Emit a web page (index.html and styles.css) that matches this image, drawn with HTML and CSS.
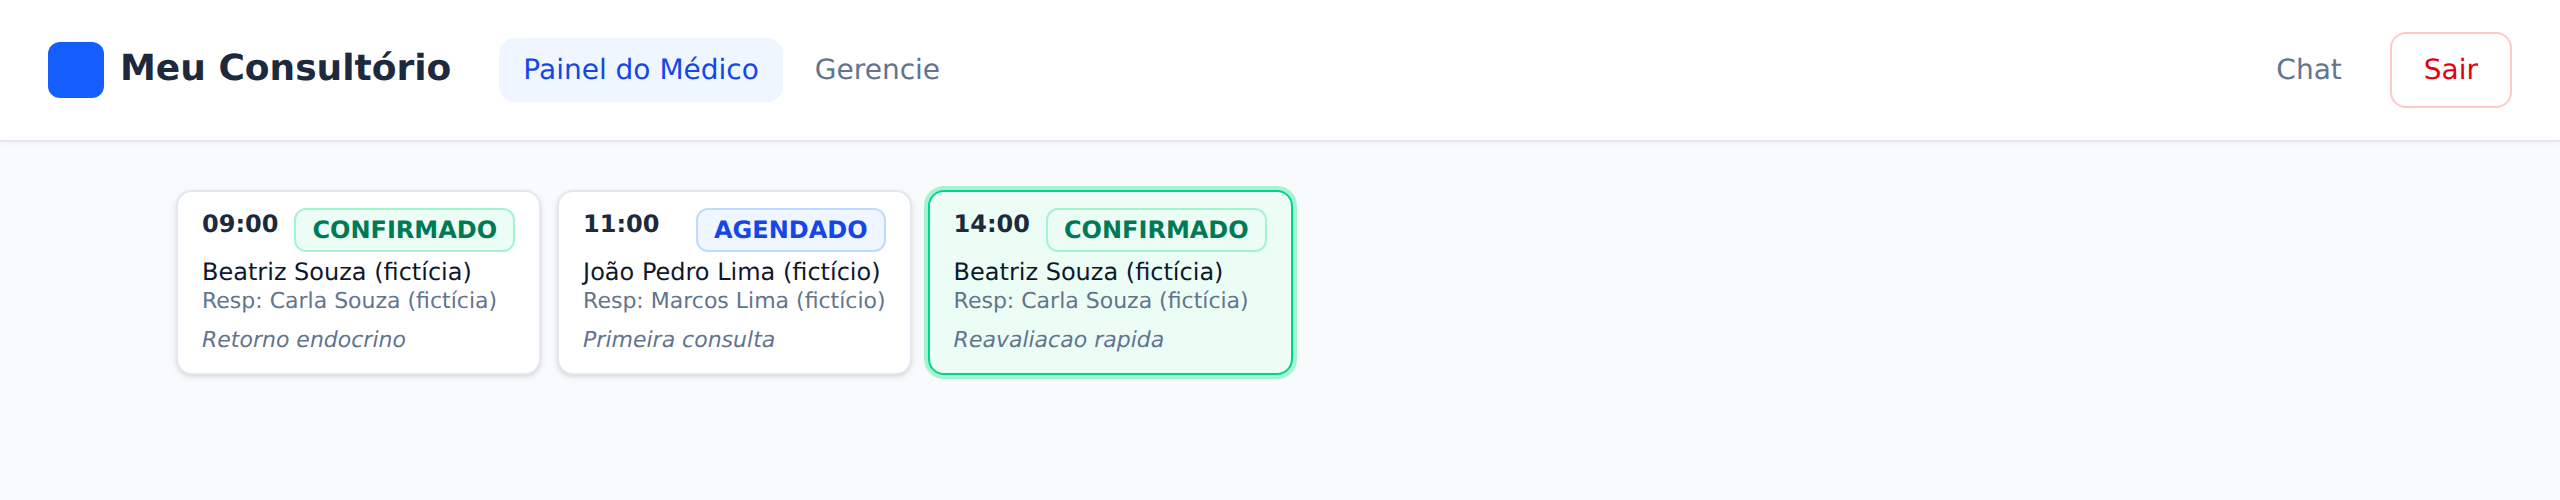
FILE: index.html
```html
<!DOCTYPE html>
<html lang="pt-BR">
<head>
<meta charset="utf-8">
<title>Meu Consultório</title>
<link rel="stylesheet" href="styles.css">
</head>
<body>
<header class="topbar">
  <div class="left">
    <div class="brand"><span class="logo"></span><span class="brand-name">Meu Consultório</span></div>
    <nav class="nav">
      <a class="nav-link active">Painel do Médico</a>
      <a class="nav-link">Gerencie</a>
    </nav>
  </div>
  <div class="right">
    <a class="nav-link">Chat</a>
    <a class="logout">Sair</a>
  </div>
</header>
<main class="content">
  <article class="card">
    <div class="card-head"><span class="time">09:00</span><span class="badge green">CONFIRMADO</span></div>
    <div class="patient">Beatriz Souza (fictícia)</div>
    <div class="resp">Resp: Carla Souza (fictícia)</div>
    <div class="note">Retorno endocrino</div>
  </article>
  <article class="card">
    <div class="card-head"><span class="time">11:00</span><span class="badge blue">AGENDADO</span></div>
    <div class="patient">João Pedro Lima (fictício)</div>
    <div class="resp">Resp: Marcos Lima (fictício)</div>
    <div class="note">Primeira consulta</div>
  </article>
  <article class="card selected">
    <div class="card-head"><span class="time">14:00</span><span class="badge green">CONFIRMADO</span></div>
    <div class="patient">Beatriz Souza (fictícia)</div>
    <div class="resp">Resp: Carla Souza (fictícia)</div>
    <div class="note">Reavaliacao rapida</div>
  </article>
</main>
</body>
</html>
```
FILE: styles.css
```css
* { box-sizing: border-box; }
html, body { margin: 0; height: 100%; }
body { background: #f8fafc; font-family: "DejaVu Sans", sans-serif; color: #0f172b; text-rendering: geometricPrecision; }
.topbar { height: 142px; background: #fff; border-bottom: 2px solid #e2e8f0; box-shadow: 0 2px 6px rgba(0,0,0,.03); display: flex; align-items: center; justify-content: space-between; padding: 0 48px; }
.left, .right, .brand, .nav { display: flex; align-items: center; }
.brand { gap: 16px; }
.logo { width: 56px; height: 56px; border-radius: 12px; background: #155dfc; }
.brand-name { font-size: 36px; font-weight: 700; color: #1d293d; line-height: 40px; margin-top: -2px; }
.nav { margin-left: 48px; gap: 8px; }
.nav-link { display: block; padding: 0 24px; height: 64px; line-height: 64px; font-size: 28px; color: #62748e; border-radius: 16px; }
.nav-link.active { background: #eff6ff; color: #1447e6; }
.right { gap: 24px; }
.logout { display: block; height: 76px; line-height: 72px; padding: 0 32px; border: 2px solid #ffc9c9; border-radius: 16px; font-size: 28px; color: #e7000b; }
.content { display: flex; align-items: flex-start; gap: 16px; padding: 48px 176px; }
.card { background: #fff; border: 2px solid #e2e8f0; border-radius: 16px; padding: 16px 24px 18px; box-shadow: 0 2px 6px rgba(0,0,0,.1), 0 2px 4px -2px rgba(0,0,0,.1); }
.card.selected { background: #ecfdf5; border-color: #00d492; box-shadow: 0 0 0 4px #a4f4cf; }
.card-head { display: flex; justify-content: space-between; align-items: flex-start; gap: 16px; }
.time { font-size: 24px; font-weight: 700; color: #1d293d; line-height: 32px; }
.badge { height: 44px; line-height: 40px; padding: 0 16px; border: 2px solid; border-radius: 12px; font-size: 24px; font-weight: 700; }
.badge.green { background: #ecfdf5; border-color: #a4f4cf; color: #007a55; }
.badge.blue { background: #eff6ff; border-color: #bedbff; color: #1447e6; }
.patient { margin-top: 4px; font-size: 24px; line-height: 32px; color: #0f172b; }
.resp { font-size: 22px; line-height: 28px; color: #62748e; }
.note { margin-top: 11px; font-size: 22px; line-height: 28px; font-style: italic; color: #62748e; }
```
